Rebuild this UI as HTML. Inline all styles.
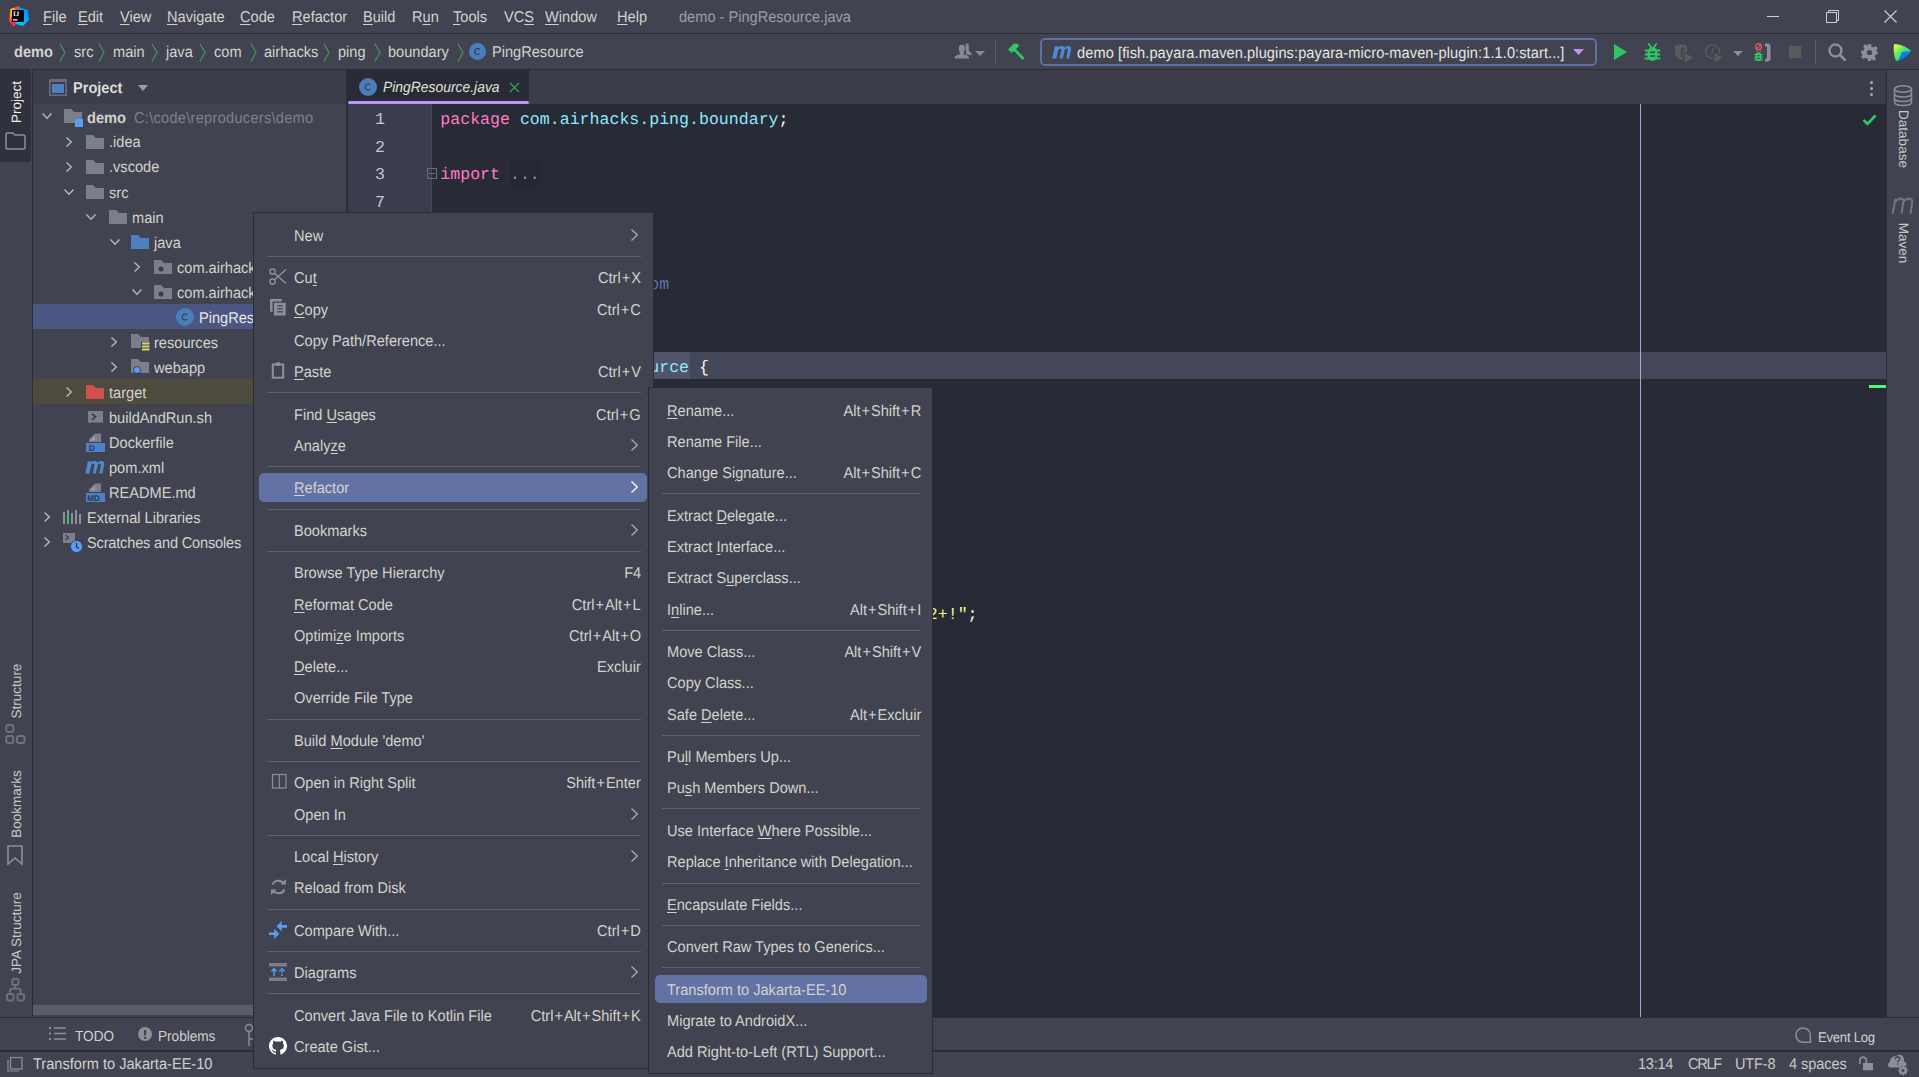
<!DOCTYPE html><html><head><meta charset="utf-8"><style>
html,body{margin:0;padding:0;width:1919px;height:1077px;overflow:hidden;background:#414450;}
body{position:relative;font-family:"Liberation Sans",sans-serif;text-rendering:geometricPrecision;}
.t{position:absolute;white-space:nowrap;line-height:normal;}
u{text-decoration:underline;text-underline-offset:1.5px;text-decoration-thickness:1px;}
svg{position:absolute;overflow:visible;}
</style></head><body>
<div style="position:absolute;left:0px;top:0px;width:1919px;height:33px;background:#414450;"></div>
<div style="position:absolute;left:0px;top:33px;width:1919px;height:1px;background:#2B2D39;"></div>
<div style="position:absolute;left:0px;top:34px;width:1919px;height:35px;background:#414450;"></div>
<div style="position:absolute;left:0px;top:69px;width:1919px;height:1px;background:#2B2D39;"></div>
<div style="position:absolute;left:0px;top:70px;width:32px;height:980px;background:#414450;"></div>
<div style="position:absolute;left:0px;top:70px;width:31px;height:92px;background:#2F313D;"></div>
<div style="position:absolute;left:32px;top:70px;width:1px;height:948px;background:#2B2D39;"></div>
<div style="position:absolute;left:33px;top:70px;width:313px;height:34px;background:#3B3D4B;"></div>
<div style="position:absolute;left:33px;top:104px;width:313px;height:913px;background:#414450;"></div>
<div style="position:absolute;left:346px;top:70px;width:2px;height:948px;background:#2B2D39;"></div>
<div style="position:absolute;left:348px;top:70px;width:1538px;height:34px;background:#3B3D4B;"></div>
<div style="position:absolute;left:348px;top:70px;width:181px;height:34px;background:#282A36;"></div>
<div style="position:absolute;left:348px;top:101px;width:181px;height:3px;background:#BD93F9;border-radius:2px;"></div>
<div style="position:absolute;left:348px;top:104px;width:1538px;height:913px;background:#282A36;"></div>
<div style="position:absolute;left:348px;top:104px;width:84px;height:913px;background:#3B3D4F;"></div>
<div style="position:absolute;left:1886px;top:70px;width:1px;height:948px;background:#2B2D39;"></div>
<div style="position:absolute;left:1887px;top:70px;width:32px;height:948px;background:#414450;"></div>
<div style="position:absolute;left:0px;top:1017px;width:1919px;height:1px;background:#2B2D39;"></div>
<div style="position:absolute;left:0px;top:1018px;width:1919px;height:32px;background:#414450;"></div>
<div style="position:absolute;left:0px;top:1050px;width:1919px;height:2px;background:#282A35;"></div>
<div style="position:absolute;left:0px;top:1052px;width:1919px;height:25px;background:#414450;"></div>
<div class="t" style="left:43px;top:8.66px;font-size:15.62px;color:#D2D2CE;font-weight:normal;font-family:'Liberation Sans',sans-serif;transform:scaleX(0.9346);transform-origin:0 0;"><u>F</u>ile</div>
<div class="t" style="left:78px;top:8.66px;font-size:15.62px;color:#D2D2CE;font-weight:normal;font-family:'Liberation Sans',sans-serif;transform:scaleX(0.9346);transform-origin:0 0;"><u>E</u>dit</div>
<div class="t" style="left:120px;top:8.66px;font-size:15.62px;color:#D2D2CE;font-weight:normal;font-family:'Liberation Sans',sans-serif;transform:scaleX(0.9346);transform-origin:0 0;"><u>V</u>iew</div>
<div class="t" style="left:167px;top:8.66px;font-size:15.62px;color:#D2D2CE;font-weight:normal;font-family:'Liberation Sans',sans-serif;transform:scaleX(0.9346);transform-origin:0 0;"><u>N</u>avigate</div>
<div class="t" style="left:240px;top:8.66px;font-size:15.62px;color:#D2D2CE;font-weight:normal;font-family:'Liberation Sans',sans-serif;transform:scaleX(0.9346);transform-origin:0 0;"><u>C</u>ode</div>
<div class="t" style="left:292px;top:8.66px;font-size:15.62px;color:#D2D2CE;font-weight:normal;font-family:'Liberation Sans',sans-serif;transform:scaleX(0.9346);transform-origin:0 0;"><u>R</u>efactor</div>
<div class="t" style="left:363px;top:8.66px;font-size:15.62px;color:#D2D2CE;font-weight:normal;font-family:'Liberation Sans',sans-serif;transform:scaleX(0.9346);transform-origin:0 0;"><u>B</u>uild</div>
<div class="t" style="left:412px;top:8.66px;font-size:15.62px;color:#D2D2CE;font-weight:normal;font-family:'Liberation Sans',sans-serif;transform:scaleX(0.9346);transform-origin:0 0;">R<u>u</u>n</div>
<div class="t" style="left:453px;top:8.66px;font-size:15.62px;color:#D2D2CE;font-weight:normal;font-family:'Liberation Sans',sans-serif;transform:scaleX(0.9346);transform-origin:0 0;"><u>T</u>ools</div>
<div class="t" style="left:504px;top:8.66px;font-size:15.62px;color:#D2D2CE;font-weight:normal;font-family:'Liberation Sans',sans-serif;transform:scaleX(0.9346);transform-origin:0 0;">VC<u>S</u></div>
<div class="t" style="left:545px;top:8.66px;font-size:15.62px;color:#D2D2CE;font-weight:normal;font-family:'Liberation Sans',sans-serif;transform:scaleX(0.9346);transform-origin:0 0;"><u>W</u>indow</div>
<div class="t" style="left:617px;top:8.66px;font-size:15.62px;color:#D2D2CE;font-weight:normal;font-family:'Liberation Sans',sans-serif;transform:scaleX(0.9346);transform-origin:0 0;"><u>H</u>elp</div>
<div class="t" style="left:679px;top:8.66px;font-size:15.62px;color:#9D9DA3;font-weight:normal;font-family:'Liberation Sans',sans-serif;transform:scaleX(0.9346);transform-origin:0 0;">demo - PingResource.java</div>
<svg style="left:8px;top:6px;" width="21" height="21" viewBox="0 0 21 21"><defs><linearGradient id="lg1" x1="0" y1="0" x2="1" y2="1"><stop offset="0" stop-color="#FF8100"/><stop offset="0.5" stop-color="#FE2857"/><stop offset="1" stop-color="#FF318C"/></linearGradient>
<linearGradient id="lg2" x1="1" y1="0" x2="0" y2="1"><stop offset="0" stop-color="#007EFF"/><stop offset="1" stop-color="#00D8FF"/></linearGradient></defs>
<path d="M2 3 L11 0 L14 6 L6 21 L1 15 Z" fill="url(#lg1)"/><path d="M10 1 L20 4 L21 14 L15 20 L8 18 Z" fill="url(#lg2)"/><path d="M2 14 L7 2 L3 3 Z" fill="#FFD000"/>
<rect x="4" y="4" width="12" height="12" fill="#000"/><text x="5" y="10.2" font-family="Liberation Serif" font-weight="bold" font-size="7" fill="#fff">IJ</text><rect x="5" y="13.2" width="4.5" height="1.3" fill="#fff"/></svg>
<div style="position:absolute;left:1767px;top:16px;width:12px;height:1px;background:#CFCFCF;"></div>
<svg style="left:1826px;top:10px;" width="13" height="13" viewBox="0 0 13 13"><rect x="0.5" y="2.5" width="10" height="10" fill="none" stroke="#CFCFCF" stroke-width="1"/><path d="M2.5 2.5 V0.5 H12.5 V10.5 H10.5" fill="none" stroke="#CFCFCF" stroke-width="1"/></svg>
<svg style="left:1884px;top:10px;" width="13" height="13" viewBox="0 0 13 13"><path d="M0.5 0.5 L12.5 12.5 M12.5 0.5 L0.5 12.5" stroke="#CFCFCF" stroke-width="1.1"/></svg>
<div class="t" style="left:14px;top:44.16px;font-size:15.62px;color:#D2D2CE;font-weight:bold;font-family:'Liberation Sans',sans-serif;transform:scaleX(0.9346);transform-origin:0 0;">demo</div>
<div class="t" style="left:74px;top:44.16px;font-size:15.62px;color:#D2D2CE;font-weight:normal;font-family:'Liberation Sans',sans-serif;transform:scaleX(0.9346);transform-origin:0 0;">src</div>
<div class="t" style="left:113px;top:44.16px;font-size:15.62px;color:#D2D2CE;font-weight:normal;font-family:'Liberation Sans',sans-serif;transform:scaleX(0.9346);transform-origin:0 0;">main</div>
<div class="t" style="left:166px;top:44.16px;font-size:15.62px;color:#D2D2CE;font-weight:normal;font-family:'Liberation Sans',sans-serif;transform:scaleX(0.9346);transform-origin:0 0;">java</div>
<div class="t" style="left:214px;top:44.16px;font-size:15.62px;color:#D2D2CE;font-weight:normal;font-family:'Liberation Sans',sans-serif;transform:scaleX(0.9346);transform-origin:0 0;">com</div>
<div class="t" style="left:264px;top:44.16px;font-size:15.62px;color:#D2D2CE;font-weight:normal;font-family:'Liberation Sans',sans-serif;transform:scaleX(0.9346);transform-origin:0 0;">airhacks</div>
<div class="t" style="left:338px;top:44.16px;font-size:15.62px;color:#D2D2CE;font-weight:normal;font-family:'Liberation Sans',sans-serif;transform:scaleX(0.9346);transform-origin:0 0;">ping</div>
<div class="t" style="left:388px;top:44.16px;font-size:15.62px;color:#D2D2CE;font-weight:normal;font-family:'Liberation Sans',sans-serif;transform:scaleX(0.9346);transform-origin:0 0;">boundary</div>
<svg style="left:59px;top:43px;" width="7" height="19" viewBox="0 0 7 19"><path d="M0.8 0.5 L6 9.5 L0.8 18.5" fill="none" stroke="#3D9A57" stroke-width="1.2"/></svg>
<svg style="left:98px;top:43px;" width="7" height="19" viewBox="0 0 7 19"><path d="M0.8 0.5 L6 9.5 L0.8 18.5" fill="none" stroke="#3D9A57" stroke-width="1.2"/></svg>
<svg style="left:151px;top:43px;" width="7" height="19" viewBox="0 0 7 19"><path d="M0.8 0.5 L6 9.5 L0.8 18.5" fill="none" stroke="#3D9A57" stroke-width="1.2"/></svg>
<svg style="left:199px;top:43px;" width="7" height="19" viewBox="0 0 7 19"><path d="M0.8 0.5 L6 9.5 L0.8 18.5" fill="none" stroke="#3D9A57" stroke-width="1.2"/></svg>
<svg style="left:250px;top:43px;" width="7" height="19" viewBox="0 0 7 19"><path d="M0.8 0.5 L6 9.5 L0.8 18.5" fill="none" stroke="#3D9A57" stroke-width="1.2"/></svg>
<svg style="left:323px;top:43px;" width="7" height="19" viewBox="0 0 7 19"><path d="M0.8 0.5 L6 9.5 L0.8 18.5" fill="none" stroke="#3D9A57" stroke-width="1.2"/></svg>
<svg style="left:374px;top:43px;" width="7" height="19" viewBox="0 0 7 19"><path d="M0.8 0.5 L6 9.5 L0.8 18.5" fill="none" stroke="#3D9A57" stroke-width="1.2"/></svg>
<svg style="left:457px;top:43px;" width="7" height="19" viewBox="0 0 7 19"><path d="M0.8 0.5 L6 9.5 L0.8 18.5" fill="none" stroke="#3D9A57" stroke-width="1.2"/></svg>
<svg style="left:469px;top:43px;" width="17" height="17" viewBox="0 0 17 17"><circle cx="8.5" cy="8.5" r="8.5" fill="#4A7DBA"/><path d="M10.9 6.5 A3.0 3.0 0 1 0 10.9 10.5" fill="none" stroke="#2E3B52" stroke-width="1.1"/></svg>
<div class="t" style="left:492px;top:44.16px;font-size:15.62px;color:#D2D2CE;font-weight:normal;font-family:'Liberation Sans',sans-serif;transform:scaleX(0.9346);transform-origin:0 0;">PingResource</div>
<svg style="left:948px;top:40px;" width="26" height="20" viewBox="0 0 26 20"><path d="M17.5 4.5 C17.8 3.8 18.5 3.6 19.2 3.6 C20.3 3.6 20.8 4.6 20.8 6 V10.6 C21.5 11.5 22.8 12.2 23.6 13.2 C24 14 23.8 15 23 15 H18 Z" fill="#868A96"/><ellipse cx="13.8" cy="8.6" rx="3.4" ry="4.2" fill="#868A96" stroke="#414450" stroke-width="1"/><path d="M6 19 C6 15.6 8.5 14.1 13.8 13.8 C19 14.1 21.6 15.6 21.6 19 Z" fill="#868A96" stroke="#414450" stroke-width="1"/><ellipse cx="13.8" cy="8.6" rx="3" ry="3.8" fill="#868A96"/><rect x="11.8" y="10" width="4" height="5.5" fill="#868A96"/></svg>
<svg style="left:975px;top:51px;" width="10" height="5" viewBox="0 0 10 5"><path d="M0 0 H10 L5 5 Z" fill="#868A96"/></svg>
<div style="position:absolute;left:995px;top:40px;width:1px;height:24px;background:#5B5E6B;"></div>
<svg style="left:1007px;top:43px;" width="19" height="18" viewBox="0 0 19 18"><path d="M1 6.5 L7 0.5 L11 1 L12 3 L9 6 L17.5 15 L15.5 17 L7 8 L4.5 10 Z" fill="#2FC760"/></svg>
<div style="position:absolute;left:1040px;top:38px;width:557px;height:28px;background:transparent;border:2px solid #6070A6;border-radius:5px;box-sizing:border-box;"></div>
<svg style="left:1052px;top:46px;" width="19.5" height="12.5" viewBox="0 0 20 12.6" preserveAspectRatio="none"><path d="M0.3 12.5 L2.9 0.3 H6 L5.8 1.4 C7 0.5 8.3 0 9.8 0 C11.3 0 12.4 0.6 12.7 1.6 C13.9 0.5 15.3 0 16.8 0 C19 0 20 1.2 19.6 3.2 L17.7 12.5 H14.5 L16.2 4.4 C16.4 3.3 16 2.8 15.1 2.8 C14.1 2.8 13.2 3.4 12.9 4.4 L11.1 12.5 H7.9 L9.6 4.4 C9.8 3.3 9.4 2.8 8.5 2.8 C7.5 2.8 6.6 3.4 6.3 4.4 L4.5 12.5 Z" fill="#5288D0"/></svg>
<div class="t" style="left:1077px;top:44.66px;font-size:15.62px;color:#E6E6E2;font-weight:normal;font-family:'Liberation Sans',sans-serif;transform:scaleX(0.9346);transform-origin:0 0;letter-spacing:0.1px;">demo [fish.payara.maven.plugins:payara-micro-maven-plugin:1.1.0:start<span style="letter-spacing:0px">...</span>]</div>
<svg style="left:1573px;top:49px;" width="11" height="6" viewBox="0 0 11 6"><path d="M0 0 H11 L5.5 6 Z" fill="#C792EA"/></svg>
<svg style="left:1614px;top:44px;" width="13" height="16" viewBox="0 0 13 16"><path d="M0 0 L13 8 L0 16 Z" fill="#2FC760"/></svg>
<svg style="left:1644px;top:43px;" width="17" height="19" viewBox="0 0 17 19"><path d="M5 1.2 L7 4.2 M12 1.2 L10 4.2" stroke="#2FC760" stroke-width="2" stroke-linecap="round"/><ellipse cx="8.5" cy="11" rx="5.3" ry="7" fill="#2FC760"/><path d="M1.5 7.5 H15.5 M1.5 11.5 H15.5 M1.5 15.5 H15.5" stroke="#2FC760" stroke-width="1.9" stroke-linecap="round"/><path d="M6 9.3 H11 M6 13 H11" stroke="#414450" stroke-width="1.4"/></svg>
<svg style="left:1675px;top:44px;" width="20" height="19" viewBox="0 0 20 19"><path d="M0 1.5 L6 0 L12 1.5 V9 C12 13 8 15 5.5 16 C2 14 0 12 0 9 Z" fill="#5A5A5A"/><path d="M9.5 4 A3.2 3.2 0 0 0 6.5 7 V13" fill="none" stroke="#414450" stroke-width="1.5"/><path d="M9 7.5 L19 13.5 L9 19.5 Z" fill="#5A5A5A" stroke="#414450" stroke-width="1.2"/></svg>
<svg style="left:1705px;top:44px;" width="20" height="19" viewBox="0 0 20 19"><circle cx="7.5" cy="7.5" r="6.8" fill="none" stroke="#5A5A5A" stroke-width="1.5"/><path d="M7.5 4 V8 L6 10" stroke="#5A5A5A" stroke-width="1.2" fill="none"/><path d="M9 8 L19 13.5 L9 19 Z" fill="#5A5A5A" stroke="#414450" stroke-width="1.2"/></svg>
<svg style="left:1733px;top:51px;" width="10" height="5" viewBox="0 0 10 5"><path d="M0 0 H10 L5 5 Z" fill="#8C8F9A"/></svg>
<svg style="left:1754px;top:43px;" width="18" height="19" viewBox="0 0 18 19"><circle cx="4.5" cy="3.8" r="3" fill="none" stroke="#E55353" stroke-width="1.4"/><path d="M2.5 5.8 L6.5 1.8" stroke="#E55353" stroke-width="1.2"/><path d="M2.5 8 L3.5 9.5 M6.5 8 L5.5 9.5" stroke="#2FC760" stroke-width="1.1"/><ellipse cx="4.5" cy="13.8" rx="3" ry="4.2" fill="#2FC760"/><path d="M0.5 11.5 H8.5 M0.5 14.2 H8.5 M0.5 17 H8.5" stroke="#2FC760" stroke-width="1.1" stroke-linecap="round"/><path d="M3 12.8 H6 M3 15.5 H6" stroke="#414450" stroke-width="0.9"/><path d="M11 0.5 H13.5 C15.5 0.5 16.5 1.5 16.5 3.5 V15.5 C16.5 17.5 15.5 18.5 13.5 18.5 H11 V15.5 H13 V3.5 H11 Z" fill="#8C8F9A"/></svg>
<div style="position:absolute;left:1789px;top:46px;width:12px;height:12px;background:#5A5A5A;"></div>
<div style="position:absolute;left:1815px;top:40px;width:1px;height:24px;background:#5B5E6B;"></div>
<svg style="left:1828px;top:43px;" width="19" height="19" viewBox="0 0 19 19"><circle cx="7.5" cy="7.5" r="6" fill="none" stroke="#8C8F9A" stroke-width="2.4"/><path d="M12 12 L17.5 17.5" stroke="#8C8F9A" stroke-width="2.6"/></svg>
<svg style="left:1861px;top:44px;" width="17" height="17" viewBox="0 0 17 17"><path d="M7 0 H10 L10.5 2.5 L12.5 3.4 L14.6 2 L16.7 4.1 L15.3 6.2 L16.2 8.2 L17 8.5 V8.5 L17 10 L14.5 10.5 L13.6 12.5 L15 14.6 L12.9 16.7 L10.8 15.3 L10 15.7 L10 17 H7 L6.5 14.6 L4.3 13.7 L2.1 15 L0 12.9 L1.4 10.8 L0.6 8.9 L0 8.5 V7 L2.5 6.5 L3.4 4.4 L2 2.3 L4.1 0.2 L6.2 1.6 L7 1.2 Z" fill="#8C8F9A"/><circle cx="8.5" cy="8.5" r="2.6" fill="#414450"/></svg>
<svg style="left:1893px;top:43px;" width="19" height="19" viewBox="0 0 19 19"><defs><linearGradient id="tb1" x1="0" y1="0" x2="1" y2="1"><stop offset="0" stop-color="#FCF84A"/><stop offset="0.5" stop-color="#3DEA62"/><stop offset="1" stop-color="#07C3F2"/></linearGradient></defs>
<path d="M1 1 C8 1 16 5 18 8 C16 11 8 17 3 18 C1 13 0 6 1 1 Z" fill="url(#tb1)"/><path d="M9 9 L18 8 C16 11 10 16 5 18 Z" fill="#087CFA"/></svg>
<div class="t" style="left:17px;top:102px;font-size:13.5px;color:#F0F0F0;transform:translate(-50%,-50%) rotate(-90deg);line-height:1;">Project</div>
<svg style="left:5px;top:132px;" width="22" height="18" viewBox="0 0 22 18"><path d="M1 2.5 C1 1.5 1.5 1 2.5 1 H8 L10 3 H18.5 C19.5 3 20 3.5 20 4.5 V15.5 C20 16.5 19.5 17 18.5 17 H2.5 C1.5 17 1 16.5 1 15.5 Z" fill="none" stroke="#8C8F9A" stroke-width="1.5"/></svg>
<div class="t" style="left:17px;top:691px;font-size:13.5px;color:#C8C8C8;transform:translate(-50%,-50%) rotate(-90deg);line-height:1;">Structure</div>
<svg style="left:0px;top:718px;" width="32" height="32" viewBox="0 0 32 32"><rect x="6.3" y="7" width="7" height="7" rx="2" fill="none" stroke="#6E717E" stroke-width="2"/><rect x="6.3" y="18" width="7" height="7" rx="2" fill="none" stroke="#6E717E" stroke-width="2"/><rect x="17" y="18" width="7.5" height="7" rx="2" fill="none" stroke="#6E717E" stroke-width="2"/></svg>
<div class="t" style="left:17px;top:804px;font-size:13.5px;color:#C8C8C8;transform:translate(-50%,-50%) rotate(-90deg);line-height:1;">Bookmarks</div>
<svg style="left:7px;top:845px;" width="17" height="20" viewBox="0 0 17 20"><path d="M1 1 H15 V19 L8 13 L1 19 Z" fill="none" stroke="#8C8F9A" stroke-width="1.6"/></svg>
<div class="t" style="left:17px;top:933px;font-size:13.5px;color:#C8C8C8;transform:translate(-50%,-50%) rotate(-90deg);line-height:1;">JPA Structure</div>
<svg style="left:0px;top:972px;" width="32" height="32" viewBox="0 0 32 32"><rect x="12.3" y="6.8" width="6.2" height="6.2" rx="1.8" fill="none" stroke="#6E717E" stroke-width="1.9"/><path d="M15.3 13 V16.6 M10 21.5 V18.5 Q10 16.6 11.9 16.6 H18.8 Q20.6 16.6 20.6 18.5 V21.5" fill="none" stroke="#6E717E" stroke-width="1.9"/><rect x="7" y="22" width="6.5" height="6.5" rx="1.8" fill="none" stroke="#6E717E" stroke-width="1.9"/><rect x="17.5" y="22" width="6.5" height="6.5" rx="1.8" fill="none" stroke="#6E717E" stroke-width="1.9"/></svg>
<svg style="left:49px;top:79px;" width="18" height="17" viewBox="0 0 18 17"><rect x="0.8" y="0.8" width="16.4" height="15.4" fill="none" stroke="#686B77" stroke-width="1.6"/><rect x="0" y="0" width="18" height="3" fill="#686B77"/><rect x="3" y="5" width="12" height="9" fill="#4E7FC0"/></svg>
<div class="t" style="left:73px;top:79.66px;font-size:15.62px;color:#DCDCD8;font-weight:bold;font-family:'Liberation Sans',sans-serif;transform:scaleX(0.9346);transform-origin:0 0;">Project</div>
<svg style="left:138px;top:85px;" width="10" height="6" viewBox="0 0 10 6"><path d="M0 0 H10 L5 6 Z" fill="#9A9DA6"/></svg>
<div style="position:absolute;left:33px;top:304px;width:313px;height:25px;background:#4B5782;"></div>
<div style="position:absolute;left:33px;top:379px;width:313px;height:25px;background:#4D4A3E;"></div>
<svg style="left:42px;top:113px;" width="10" height="6" viewBox="0 0 10 6"><path d="M0.5 0.5 L5.0 5.3 L9.5 0.5" fill="none" stroke="#B8B8B8" stroke-width="1.4"/></svg>
<svg style="left:64px;top:109px;" width="18" height="14" viewBox="0 0 18 14"><path d="M0 0 H7 L10 3 H18 V14 H0 Z" fill="#7C7F8A"/></svg>
<div style="position:absolute;left:75px;top:119px;width:8px;height:8px;background:#589DF6;"></div>
<div class="t" style="left:87px;top:109.66px;font-size:15.62px;color:#D2D2CE;font-weight:bold;font-family:'Liberation Sans',sans-serif;transform:scaleX(0.9346);transform-origin:0 0;">demo</div>
<div class="t" style="left:134px;top:109.66px;font-size:15.62px;color:#7E808A;font-weight:normal;font-family:'Liberation Sans',sans-serif;transform:scaleX(0.9346);transform-origin:0 0;letter-spacing:0.3px;">C:\code\reproducers\demo</div>
<svg style="left:66px;top:137px;" width="6" height="10" viewBox="0 0 6 10"><path d="M0.5 0.5 L5.3 5.0 L0.5 9.5" fill="none" stroke="#B8B8B8" stroke-width="1.4"/></svg>
<svg style="left:86px;top:135px;" width="18" height="14" viewBox="0 0 18 14"><path d="M0 0 H7 L10 3 H18 V14 H0 Z" fill="#7C7F8A"/></svg>
<div class="t" style="left:109px;top:134.16px;font-size:15.62px;color:#D2D2CE;font-weight:normal;font-family:'Liberation Sans',sans-serif;transform:scaleX(0.9346);transform-origin:0 0;">.idea</div>
<svg style="left:66px;top:162px;" width="6" height="10" viewBox="0 0 6 10"><path d="M0.5 0.5 L5.3 5.0 L0.5 9.5" fill="none" stroke="#B8B8B8" stroke-width="1.4"/></svg>
<svg style="left:86px;top:160px;" width="18" height="14" viewBox="0 0 18 14"><path d="M0 0 H7 L10 3 H18 V14 H0 Z" fill="#7C7F8A"/></svg>
<div class="t" style="left:109px;top:159.16px;font-size:15.62px;color:#D2D2CE;font-weight:normal;font-family:'Liberation Sans',sans-serif;transform:scaleX(0.9346);transform-origin:0 0;">.vscode</div>
<svg style="left:64px;top:189px;" width="10" height="6" viewBox="0 0 10 6"><path d="M0.5 0.5 L5.0 5.3 L9.5 0.5" fill="none" stroke="#B8B8B8" stroke-width="1.4"/></svg>
<svg style="left:86px;top:185px;" width="18" height="14" viewBox="0 0 18 14"><path d="M0 0 H7 L10 3 H18 V14 H0 Z" fill="#7C7F8A"/></svg>
<div class="t" style="left:109px;top:184.66px;font-size:15.62px;color:#D2D2CE;font-weight:normal;font-family:'Liberation Sans',sans-serif;transform:scaleX(0.9346);transform-origin:0 0;">src</div>
<svg style="left:86px;top:214px;" width="10" height="6" viewBox="0 0 10 6"><path d="M0.5 0.5 L5.0 5.3 L9.5 0.5" fill="none" stroke="#B8B8B8" stroke-width="1.4"/></svg>
<svg style="left:109px;top:210px;" width="18" height="14" viewBox="0 0 18 14"><path d="M0 0 H7 L10 3 H18 V14 H0 Z" fill="#7C7F8A"/></svg>
<div class="t" style="left:132px;top:209.66px;font-size:15.62px;color:#D2D2CE;font-weight:normal;font-family:'Liberation Sans',sans-serif;transform:scaleX(0.9346);transform-origin:0 0;">main</div>
<svg style="left:110px;top:239px;" width="10" height="6" viewBox="0 0 10 6"><path d="M0.5 0.5 L5.0 5.3 L9.5 0.5" fill="none" stroke="#B8B8B8" stroke-width="1.4"/></svg>
<svg style="left:131px;top:235px;" width="18" height="14" viewBox="0 0 18 14"><path d="M0 0 H7 L10 3 H18 V14 H0 Z" fill="#4E7FC0"/></svg>
<div class="t" style="left:154px;top:234.66px;font-size:15.62px;color:#D2D2CE;font-weight:normal;font-family:'Liberation Sans',sans-serif;transform:scaleX(0.9346);transform-origin:0 0;">java</div>
<svg style="left:134px;top:262px;" width="6" height="10" viewBox="0 0 6 10"><path d="M0.5 0.5 L5.3 5.0 L0.5 9.5" fill="none" stroke="#B8B8B8" stroke-width="1.4"/></svg>
<svg style="left:154px;top:260px;" width="18" height="14" viewBox="0 0 18 14"><path d="M0 0 H7 L10 3 H18 V14 H0 Z" fill="#7C7F8A"/></svg>
<svg style="left:158px;top:266px;" width="6" height="6" viewBox="0 0 6 6"><circle cx="3" cy="3" r="2.5" fill="#3A3C48"/></svg>
<div class="t" style="left:177px;top:259.66px;font-size:15.62px;color:#D2D2CE;font-weight:normal;font-family:'Liberation Sans',sans-serif;transform:scaleX(0.9346);transform-origin:0 0;">com.airhacks.ping</div>
<svg style="left:132px;top:289px;" width="10" height="6" viewBox="0 0 10 6"><path d="M0.5 0.5 L5.0 5.3 L9.5 0.5" fill="none" stroke="#B8B8B8" stroke-width="1.4"/></svg>
<svg style="left:154px;top:285px;" width="18" height="14" viewBox="0 0 18 14"><path d="M0 0 H7 L10 3 H18 V14 H0 Z" fill="#7C7F8A"/></svg>
<svg style="left:158px;top:291px;" width="6" height="6" viewBox="0 0 6 6"><circle cx="3" cy="3" r="2.5" fill="#3A3C48"/></svg>
<div class="t" style="left:177px;top:284.66px;font-size:15.62px;color:#D2D2CE;font-weight:normal;font-family:'Liberation Sans',sans-serif;transform:scaleX(0.9346);transform-origin:0 0;">com.airhacks.ping.boundary</div>
<svg style="left:176px;top:308px;" width="18" height="18" viewBox="0 0 18 18"><circle cx="9.0" cy="9.0" r="9.0" fill="#4A7DBA"/><path d="M11.4 7.0 A3.0 3.0 0 1 0 11.4 11.0" fill="none" stroke="#2E3B52" stroke-width="1.1"/></svg>
<div class="t" style="left:199px;top:309.66px;font-size:15.62px;color:#E8E8E4;font-weight:normal;font-family:'Liberation Sans',sans-serif;transform:scaleX(0.9346);transform-origin:0 0;">PingResource</div>
<svg style="left:111px;top:337px;" width="6" height="10" viewBox="0 0 6 10"><path d="M0.5 0.5 L5.3 5.0 L0.5 9.5" fill="none" stroke="#B8B8B8" stroke-width="1.4"/></svg>
<svg style="left:131px;top:334px;" width="18" height="14" viewBox="0 0 18 14"><path d="M0 0 H7 L10 3 H18 V14 H0 Z" fill="#7C7F8A"/></svg>
<svg style="left:141px;top:342px;" width="9" height="10" viewBox="0 0 9 10"><rect x="0" y="0" width="9" height="10" fill="#414450"/><path d="M1 1.5 H8.5 M1 4.5 H8.5 M1 7.5 H8.5" stroke="#D9D572" stroke-width="1.8"/></svg>
<div class="t" style="left:154px;top:334.66px;font-size:15.62px;color:#D2D2CE;font-weight:normal;font-family:'Liberation Sans',sans-serif;transform:scaleX(0.9346);transform-origin:0 0;">resources</div>
<svg style="left:111px;top:362px;" width="6" height="10" viewBox="0 0 6 10"><path d="M0.5 0.5 L5.3 5.0 L0.5 9.5" fill="none" stroke="#B8B8B8" stroke-width="1.4"/></svg>
<svg style="left:131px;top:359px;" width="18" height="14" viewBox="0 0 18 14"><path d="M0 0 H7 L10 3 H18 V14 H0 Z" fill="#7C7F8A"/></svg>
<svg style="left:133px;top:366px;" width="8" height="8" viewBox="0 0 8 8"><circle cx="4" cy="4" r="3.8" fill="#3A3C48"/><circle cx="4" cy="4" r="3" fill="#589DF6"/></svg>
<div class="t" style="left:154px;top:359.66px;font-size:15.62px;color:#D2D2CE;font-weight:normal;font-family:'Liberation Sans',sans-serif;transform:scaleX(0.9346);transform-origin:0 0;">webapp</div>
<svg style="left:66px;top:387px;" width="6" height="10" viewBox="0 0 6 10"><path d="M0.5 0.5 L5.3 5.0 L0.5 9.5" fill="none" stroke="#B8B8B8" stroke-width="1.4"/></svg>
<svg style="left:86px;top:385px;" width="18" height="14" viewBox="0 0 18 14"><path d="M0 0 H7 L10 3 H18 V14 H0 Z" fill="#D14F4F"/></svg>
<div class="t" style="left:109px;top:384.66px;font-size:15.62px;color:#D2D2CE;font-weight:normal;font-family:'Liberation Sans',sans-serif;transform:scaleX(0.9346);transform-origin:0 0;">target</div>
<svg style="left:87.5px;top:411px;" width="15" height="12" viewBox="0 0 15 12"><rect x="0" y="0" width="15" height="11.6" fill="#7C7F8A"/><path d="M4 2.8 L7.5 5.8 L4 8.8" fill="none" stroke="#3A3C48" stroke-width="1.6"/></svg>
<div class="t" style="left:109px;top:409.66px;font-size:15.62px;color:#D2D2CE;font-weight:normal;font-family:'Liberation Sans',sans-serif;transform:scaleX(0.9346);transform-origin:0 0;">buildAndRun.sh</div>
<svg style="left:86px;top:433px;" width="19" height="19" viewBox="0 0 19 19"><rect x="3" y="0.5" width="12" height="8.5" fill="#7C7F8A"/><path d="M2.5 0 H9.5 L2.5 7 Z" fill="#414450"/><path d="M4 7.5 L9 2.5 V7.5 Z" fill="#9A9DA6"/><rect x="0" y="10" width="19" height="9" fill="#4E80C4"/><text x="2.8" y="17.8" font-family="Liberation Sans" font-weight="bold" font-size="8.5" fill="#2B3A55">D</text></svg>
<div class="t" style="left:109px;top:434.66px;font-size:15.62px;color:#D2D2CE;font-weight:normal;font-family:'Liberation Sans',sans-serif;transform:scaleX(0.9346);transform-origin:0 0;">Dockerfile</div>
<svg style="left:85.3px;top:460.6px;" width="19.6" height="12.5" viewBox="0 0 20 12.6" preserveAspectRatio="none"><path d="M0.3 12.5 L2.9 0.3 H6 L5.8 1.4 C7 0.5 8.3 0 9.8 0 C11.3 0 12.4 0.6 12.7 1.6 C13.9 0.5 15.3 0 16.8 0 C19 0 20 1.2 19.6 3.2 L17.7 12.5 H14.5 L16.2 4.4 C16.4 3.3 16 2.8 15.1 2.8 C14.1 2.8 13.2 3.4 12.9 4.4 L11.1 12.5 H7.9 L9.6 4.4 C9.8 3.3 9.4 2.8 8.5 2.8 C7.5 2.8 6.6 3.4 6.3 4.4 L4.5 12.5 Z" fill="#5288D0"/></svg>
<div class="t" style="left:109px;top:459.66px;font-size:15.62px;color:#D2D2CE;font-weight:normal;font-family:'Liberation Sans',sans-serif;transform:scaleX(0.9346);transform-origin:0 0;">pom.xml</div>
<svg style="left:86px;top:483px;" width="19" height="19" viewBox="0 0 19 19"><rect x="3" y="0.5" width="12" height="8.5" fill="#7C7F8A"/><path d="M2.5 0 H9.5 L2.5 7 Z" fill="#414450"/><path d="M4 7.5 L9 2.5 V7.5 Z" fill="#9A9DA6"/><rect x="0" y="10" width="19" height="9" fill="#4E80C4"/><text x="1.2" y="17.8" font-family="Liberation Sans" font-weight="bold" font-size="8.2" fill="#2B3A55">MD</text></svg>
<div class="t" style="left:109px;top:484.66px;font-size:15.62px;color:#D2D2CE;font-weight:normal;font-family:'Liberation Sans',sans-serif;transform:scaleX(0.9346);transform-origin:0 0;">README.md</div>
<svg style="left:44px;top:512px;" width="6" height="10" viewBox="0 0 6 10"><path d="M0.5 0.5 L5.3 5.0 L0.5 9.5" fill="none" stroke="#B8B8B8" stroke-width="1.4"/></svg>
<svg style="left:63px;top:509px;" width="18" height="16" viewBox="0 0 18 16"><path d="M1 3 V15 M5 1 V15 M9 4 V15 M13 1 V15 M17 5 V15" stroke="#8C8F9A" stroke-width="2"/><path d="M5 5 V15" stroke="#2FC760" stroke-width="2"/></svg>
<div class="t" style="left:87px;top:509.66px;font-size:15.62px;color:#D2D2CE;font-weight:normal;font-family:'Liberation Sans',sans-serif;transform:scaleX(0.9346);transform-origin:0 0;">External Libraries</div>
<svg style="left:44px;top:537px;" width="6" height="10" viewBox="0 0 6 10"><path d="M0.5 0.5 L5.3 5.0 L0.5 9.5" fill="none" stroke="#B8B8B8" stroke-width="1.4"/></svg>
<svg style="left:63px;top:533px;" width="20" height="20" viewBox="0 0 20 20"><rect x="0" y="0" width="12" height="10" fill="#7C7F8A"/><path d="M2.5 2 L5.5 4.5 L2.5 7" stroke="#414450" stroke-width="1.3" fill="none"/><circle cx="13.5" cy="13.5" r="6" fill="#589DF6" stroke="#414450" stroke-width="1"/><path d="M13.5 10 V14 L16 15.5" stroke="#2B2D3A" stroke-width="1.3" fill="none"/></svg>
<div class="t" style="left:87px;top:534.66px;font-size:15.62px;color:#D2D2CE;font-weight:normal;font-family:'Liberation Sans',sans-serif;transform:scaleX(0.9346);transform-origin:0 0;letter-spacing:-0.2px;">Scratches and Consoles</div>
<div style="position:absolute;left:33px;top:1005px;width:220px;height:10px;background:#5A5D6A;"></div>
<svg style="left:359px;top:78px;" width="18" height="18" viewBox="0 0 18 18"><circle cx="9.0" cy="9.0" r="9.0" fill="#4A7DBA"/><path d="M11.4 7.0 A3.0 3.0 0 1 0 11.4 11.0" fill="none" stroke="#2E3B52" stroke-width="1.1"/></svg>
<div class="t" style="left:383px;top:80.34px;font-size:14.87px;color:#E2E2DA;font-weight:normal;font-family:'Liberation Sans',sans-serif;transform:scaleX(0.9346);transform-origin:0 0;"><i>PingResource.java</i></div>
<svg style="left:509px;top:82px;" width="11" height="11" viewBox="0 0 11 11"><path d="M1 1 L10 10 M10 1 L1 10" stroke="#39A060" stroke-width="1.25"/></svg>
<div style="position:absolute;left:1870px;top:81px;width:3px;height:3px;background:#A8AAB2;border-radius:50%;"></div>
<div style="position:absolute;left:1870px;top:87px;width:3px;height:3px;background:#A8AAB2;border-radius:50%;"></div>
<div style="position:absolute;left:1870px;top:93px;width:3px;height:3px;background:#A8AAB2;border-radius:50%;"></div>
<div style="position:absolute;left:431px;top:104px;width:1px;height:913px;background:#45475A;"></div>
<div style="position:absolute;left:432px;top:352px;width:1454px;height:27px;background:#44475A;"></div>
<div style="position:absolute;left:432px;top:352px;width:0px;height:27px;background:#44475A;"></div>
<div class="t" style="right:1534px;top:110.19px;font-size:16.58px;font-family:'Liberation Mono',monospace;color:#C5C6CE;">1</div>
<div class="t" style="right:1534px;top:137.69px;font-size:16.58px;font-family:'Liberation Mono',monospace;color:#C5C6CE;">2</div>
<div class="t" style="right:1534px;top:165.19px;font-size:16.58px;font-family:'Liberation Mono',monospace;color:#C5C6CE;">3</div>
<div class="t" style="right:1534px;top:192.69px;font-size:16.58px;font-family:'Liberation Mono',monospace;color:#C5C6CE;">7</div>
<div class="t" style="left:440.30px;top:110.19px;font-size:16.58px;font-family:'Liberation Mono',monospace;"><span style="color:#FF79C6">package</span><span style="color:#F8F8F2"> </span><span style="color:#8BE9FD">com.airhacks.ping.boundary</span><span style="color:#F8F8F2">;</span></div>
<div class="t" style="left:440.30px;top:165.19px;font-size:16.58px;font-family:'Liberation Mono',monospace;"><span style="color:#FF79C6">import</span><span style="color:#F8F8F2"> </span></div>
<div style="position:absolute;left:510px;top:159px;width:30px;height:28px;background:#252732;"></div>
<div class="t" style="left:509.95px;top:165.19px;font-size:16.58px;font-family:'Liberation Mono',monospace;"><span style="color:#8C91AC">...</span></div>
<svg style="left:427px;top:168px;" width="10" height="11" viewBox="0 0 10 11"><rect x="0.5" y="0.5" width="9" height="10" fill="none" stroke="#6B6E85" stroke-width="1"/><path d="M2 5.5 H8" stroke="#6B6E85" stroke-width="1"/></svg>
<div class="t" style="left:450.25px;top:275.19px;font-size:16.58px;font-family:'Liberation Mono',monospace;"><span style="color:#6272A4"> * @author airhacks.com</span></div>
<div style="position:absolute;left:649.9px;top:352px;width:39.8px;height:27px;background:#505369;"></div>
<div class="t" style="left:440.30px;top:357.69px;font-size:16.58px;font-family:'Liberation Mono',monospace;"><span style="color:#FF79C6">public</span><span style="color:#F8F8F2"> class </span><span style="color:#8BE9FD">PingResource</span><span style="color:#F8F8F2"> {</span></div>
<div class="t" style="left:519.90px;top:605.19px;font-size:16.58px;font-family:'Liberation Mono',monospace;"><span style="color:#FF79C6">return</span><span style="color:#F8F8F2"> </span><span style="color:#F1FA8C">"ping from Jakarta EE 10 and Java 2+!"</span><span style="color:#F8F8F2">;</span></div>
<div style="position:absolute;left:1640px;top:104px;width:1px;height:913px;background:#A3AADB;"></div>
<svg style="left:1862px;top:114px;" width="15" height="12" viewBox="0 0 15 12"><path d="M1.5 6 L5.5 10 L13.5 1.5" fill="none" stroke="#2FC760" stroke-width="2.6"/></svg>
<div style="position:absolute;left:1869px;top:385px;width:17px;height:2.5px;background:#50FA7B;"></div>
<svg style="left:1893px;top:85px;" width="20" height="21" viewBox="0 0 20 21"><ellipse cx="10" cy="4" rx="8.5" ry="3.2" fill="none" stroke="#8C8F9A" stroke-width="1.5"/><path d="M1.5 4 V17 C1.5 19 5 20.5 10 20.5 C15 20.5 18.5 19 18.5 17 V4 M1.5 8.5 C1.5 10.5 5 12 10 12 C15 12 18.5 10.5 18.5 8.5 M1.5 13 C1.5 15 5 16.5 10 16.5 C15 16.5 18.5 15 18.5 13" fill="none" stroke="#8C8F9A" stroke-width="1.5"/></svg>
<div class="t" style="left:1903px;top:139px;font-size:13.5px;color:#C8C8C8;transform:translate(-50%,-50%) rotate(90deg);line-height:1;">Database</div>
<svg style="left:1886px;top:190px;" width="33" height="32" viewBox="0 0 33 32"><path d="M6.8 23 L9.3 9.6 M9.0 11.8 C11 9.3 13 8.6 15 8.6 C17 8.6 17.6 10 17.3 12 L15.6 23 M17.3 12 C19 9.5 21 8.6 23 8.6 C25.5 8.6 26.5 10 26.2 12.5 L24.6 23" fill="none" stroke="#71747F" stroke-width="2.1" stroke-linecap="round"/></svg>
<div class="t" style="left:1903px;top:243px;font-size:13.5px;color:#C8C8C8;transform:translate(-50%,-50%) rotate(90deg);line-height:1;">Maven</div>
<svg style="left:49px;top:1027px;" width="18" height="14" viewBox="0 0 18 14"><path d="M0 1 H2 M0 6.5 H2 M0 12 H2" stroke="#8C8F9A" stroke-width="2"/><path d="M5 1 H17 M5 6.5 H17 M5 12 H17" stroke="#8C8F9A" stroke-width="1.6"/></svg>
<div class="t" style="left:75px;top:1028.63px;font-size:14.55px;color:#D0D0D0;font-weight:normal;font-family:'Liberation Sans',sans-serif;transform:scaleX(0.9346);transform-origin:0 0;">TODO</div>
<svg style="left:138px;top:1027px;" width="14" height="14" viewBox="0 0 14 14"><circle cx="7" cy="7" r="7" fill="#8C8F9A"/><rect x="6" y="3" width="2.2" height="5.5" fill="#414450"/><rect x="6" y="9.8" width="2.2" height="2" fill="#414450"/></svg>
<div class="t" style="left:158px;top:1028.63px;font-size:14.55px;color:#D0D0D0;font-weight:normal;font-family:'Liberation Sans',sans-serif;transform:scaleX(0.9346);transform-origin:0 0;">Problems</div>
<svg style="left:244px;top:1024px;" width="10" height="24" viewBox="0 0 10 24"><circle cx="5" cy="4" r="3.5" fill="none" stroke="#8C8F9A" stroke-width="1.4"/><path d="M5 7.5 V22 M5 15 H9" stroke="#8C8F9A" stroke-width="1.4"/></svg>
<svg style="left:1795px;top:1027px;" width="17" height="17" viewBox="0 0 17 17"><path d="M15.5 15.3 H8 A7.2 7.2 0 1 1 15.3 8.1 Z" fill="none" stroke="#8C8F9A" stroke-width="1.5"/></svg>
<div class="t" style="left:1817.5px;top:1029.11px;font-size:14.02px;color:#D0D0D0;font-weight:normal;font-family:'Liberation Sans',sans-serif;transform:scaleX(0.9346);transform-origin:0 0;letter-spacing:-0.25px;">Event Log</div>
<svg style="left:6px;top:1057px;" width="17" height="16" viewBox="0 0 17 16"><rect x="4.5" y="0.5" width="11.5" height="11.5" fill="none" stroke="#8C8F9A" stroke-width="1.2"/><path d="M2 3 V14 H13" fill="none" stroke="#8C8F9A" stroke-width="1.2"/></svg>
<div class="t" style="left:33px;top:1055.66px;font-size:15.62px;color:#D0D0D0;font-weight:normal;font-family:'Liberation Sans',sans-serif;transform:scaleX(0.9346);transform-origin:0 0;">Transform to Jakarta-EE-10</div>
<div class="t" style="left:1637.5px;top:1055.66px;font-size:15.62px;color:#C8C8C4;font-weight:normal;font-family:'Liberation Sans',sans-serif;transform:scaleX(0.9346);transform-origin:0 0;letter-spacing:-0.3px;">13:14</div>
<div class="t" style="left:1688px;top:1055.66px;font-size:15.62px;color:#C8C8C4;font-weight:normal;font-family:'Liberation Sans',sans-serif;transform:scaleX(0.9346);transform-origin:0 0;letter-spacing:-1.4px;">CRLF</div>
<div class="t" style="left:1735px;top:1055.66px;font-size:15.62px;color:#C8C8C4;font-weight:normal;font-family:'Liberation Sans',sans-serif;transform:scaleX(0.9346);transform-origin:0 0;letter-spacing:-0.2px;">UTF-8</div>
<div class="t" style="left:1789px;top:1055.66px;font-size:15.62px;color:#C8C8C4;font-weight:normal;font-family:'Liberation Sans',sans-serif;transform:scaleX(0.9346);transform-origin:0 0;letter-spacing:-0.1px;">4 spaces</div>
<svg style="left:1858px;top:1055px;" width="16" height="17" viewBox="0 0 16 17"><rect x="5" y="8" width="10" height="7.3" fill="#8C8F9A"/><path d="M1.8 9 V5.5 A3.3 3.3 0 0 1 8.4 5.5 V8" fill="none" stroke="#8C8F9A" stroke-width="1.7"/></svg>
<svg style="left:1887px;top:1054px;" width="22" height="22" viewBox="0 0 22 22"><path d="M3.5 13.5 C0.5 13.5 0 9 2.8 8.2 C2.8 3.5 6.5 1.5 9.5 2.3 C11 0.3 14.5 0.3 16 2.8 C17.5 5 17 7.5 17 7.5 C19.5 8 20 11 18.5 12.5 L14 13.5 Z" fill="#8C8F9A"/><path d="M8.3 5.2 C8.3 3.6 9.5 3 10.6 3 C11.8 3 12.8 3.7 12.8 4.9 C12.8 6.5 10.7 6.6 10.7 8.3" fill="none" stroke="#414450" stroke-width="1.3"/><rect x="10" y="9.3" width="1.4" height="1.4" fill="#414450"/><circle cx="16" cy="16.5" r="4.6" fill="#414450"/><path d="M15 11.8 H17 L17.3 13.2 L18.6 12.5 L20 13.9 L19.3 15.2 L20.7 15.5 V17.5 L19.3 17.8 L20 19.1 L18.6 20.5 L17.3 19.8 L17 21.2 H15 L14.7 19.8 L13.4 20.5 L12 19.1 L12.7 17.8 L11.3 17.5 V15.5 L12.7 15.2 L12 13.9 L13.4 12.5 L14.7 13.2 Z" fill="#8C8F9A"/><circle cx="16" cy="16.5" r="1.5" fill="#414450"/></svg>
<div style="position:absolute;left:253px;top:212px;width:401px;height:857px;background:#414450;border:1px solid #2A2C37;box-sizing:border-box;"></div>
<div style="position:absolute;left:259px;top:473px;width:388px;height:29px;background:#6272A4;border-radius:5px;"></div>
<div class="t" style="left:294px;top:227.66px;font-size:15.62px;color:#D2D2CE;font-weight:normal;font-family:'Liberation Sans',sans-serif;transform:scaleX(0.9346);transform-origin:0 0;">New</div>
<div style="position:absolute;left:267px;top:256px;width:374px;height:1px;background:#5D6070;"></div>
<div class="t" style="left:294px;top:269.66px;font-size:15.62px;color:#D2D2CE;font-weight:normal;font-family:'Liberation Sans',sans-serif;transform:scaleX(0.9346);transform-origin:0 0;">Cu<u>t</u></div>
<div class="t" style="right:1278px;top:269.66px;font-size:15.62px;color:#D2D2CE;transform:scaleX(0.9346);transform-origin:100% 0;">Ctrl<span style="margin:0 1.05px">+</span>X</div>
<div class="t" style="left:294px;top:301.66px;font-size:15.62px;color:#D2D2CE;font-weight:normal;font-family:'Liberation Sans',sans-serif;transform:scaleX(0.9346);transform-origin:0 0;"><u>C</u>opy</div>
<div class="t" style="right:1278px;top:301.66px;font-size:15.62px;color:#D2D2CE;transform:scaleX(0.9346);transform-origin:100% 0;">Ctrl<span style="margin:0 1.05px">+</span>C</div>
<div class="t" style="left:294px;top:332.66px;font-size:15.62px;color:#D2D2CE;font-weight:normal;font-family:'Liberation Sans',sans-serif;transform:scaleX(0.9346);transform-origin:0 0;">Copy Path/Reference<span style="letter-spacing:0px">...</span></div>
<div class="t" style="left:294px;top:363.66px;font-size:15.62px;color:#D2D2CE;font-weight:normal;font-family:'Liberation Sans',sans-serif;transform:scaleX(0.9346);transform-origin:0 0;"><u>P</u>aste</div>
<div class="t" style="right:1278px;top:363.66px;font-size:15.62px;color:#D2D2CE;transform:scaleX(0.9346);transform-origin:100% 0;">Ctrl<span style="margin:0 1.05px">+</span>V</div>
<div style="position:absolute;left:267px;top:392px;width:374px;height:1px;background:#5D6070;"></div>
<div class="t" style="left:294px;top:406.66px;font-size:15.62px;color:#D2D2CE;font-weight:normal;font-family:'Liberation Sans',sans-serif;transform:scaleX(0.9346);transform-origin:0 0;">Find <u>U</u>sages</div>
<div class="t" style="right:1278px;top:406.66px;font-size:15.62px;color:#D2D2CE;transform:scaleX(0.9346);transform-origin:100% 0;">Ctrl<span style="margin:0 1.05px">+</span>G</div>
<div class="t" style="left:294px;top:437.66px;font-size:15.62px;color:#D2D2CE;font-weight:normal;font-family:'Liberation Sans',sans-serif;transform:scaleX(0.9346);transform-origin:0 0;">Analy<u>z</u>e</div>
<div style="position:absolute;left:267px;top:466px;width:374px;height:1px;background:#5D6070;"></div>
<div class="t" style="left:294px;top:479.66px;font-size:15.62px;color:#D2D2CE;font-weight:normal;font-family:'Liberation Sans',sans-serif;transform:scaleX(0.9346);transform-origin:0 0;"><u>R</u>efactor</div>
<div style="position:absolute;left:267px;top:509px;width:374px;height:1px;background:#5D6070;"></div>
<div class="t" style="left:294px;top:522.66px;font-size:15.62px;color:#D2D2CE;font-weight:normal;font-family:'Liberation Sans',sans-serif;transform:scaleX(0.9346);transform-origin:0 0;">Bookmarks</div>
<div style="position:absolute;left:267px;top:551px;width:374px;height:1px;background:#5D6070;"></div>
<div class="t" style="left:294px;top:564.66px;font-size:15.62px;color:#D2D2CE;font-weight:normal;font-family:'Liberation Sans',sans-serif;transform:scaleX(0.9346);transform-origin:0 0;">Browse Type Hierarchy</div>
<div class="t" style="right:1278px;top:564.66px;font-size:15.62px;color:#D2D2CE;transform:scaleX(0.9346);transform-origin:100% 0;">F4</div>
<div class="t" style="left:294px;top:596.66px;font-size:15.62px;color:#D2D2CE;font-weight:normal;font-family:'Liberation Sans',sans-serif;transform:scaleX(0.9346);transform-origin:0 0;"><u>R</u>eformat Code</div>
<div class="t" style="right:1278px;top:596.66px;font-size:15.62px;color:#D2D2CE;transform:scaleX(0.9346);transform-origin:100% 0;">Ctrl<span style="margin:0 1.05px">+</span>Alt<span style="margin:0 1.05px">+</span>L</div>
<div class="t" style="left:294px;top:627.66px;font-size:15.62px;color:#D2D2CE;font-weight:normal;font-family:'Liberation Sans',sans-serif;transform:scaleX(0.9346);transform-origin:0 0;">Optimi<u>z</u>e Imports</div>
<div class="t" style="right:1278px;top:627.66px;font-size:15.62px;color:#D2D2CE;transform:scaleX(0.9346);transform-origin:100% 0;">Ctrl<span style="margin:0 1.05px">+</span>Alt<span style="margin:0 1.05px">+</span>O</div>
<div class="t" style="left:294px;top:658.66px;font-size:15.62px;color:#D2D2CE;font-weight:normal;font-family:'Liberation Sans',sans-serif;transform:scaleX(0.9346);transform-origin:0 0;"><u>D</u>elete<span style="letter-spacing:0px">...</span></div>
<div class="t" style="right:1278px;top:658.66px;font-size:15.62px;color:#D2D2CE;transform:scaleX(0.9346);transform-origin:100% 0;">Excluir</div>
<div class="t" style="left:294px;top:689.66px;font-size:15.62px;color:#D2D2CE;font-weight:normal;font-family:'Liberation Sans',sans-serif;transform:scaleX(0.9346);transform-origin:0 0;">Override File Type</div>
<div style="position:absolute;left:267px;top:719px;width:374px;height:1px;background:#5D6070;"></div>
<div class="t" style="left:294px;top:732.66px;font-size:15.62px;color:#D2D2CE;font-weight:normal;font-family:'Liberation Sans',sans-serif;transform:scaleX(0.9346);transform-origin:0 0;">Build <u>M</u>odule 'demo'</div>
<div style="position:absolute;left:267px;top:761px;width:374px;height:1px;background:#5D6070;"></div>
<div class="t" style="left:294px;top:774.66px;font-size:15.62px;color:#D2D2CE;font-weight:normal;font-family:'Liberation Sans',sans-serif;transform:scaleX(0.9346);transform-origin:0 0;">Open in Right Split</div>
<div class="t" style="right:1278px;top:774.66px;font-size:15.62px;color:#D2D2CE;transform:scaleX(0.9346);transform-origin:100% 0;">Shift<span style="margin:0 1.05px">+</span>Enter</div>
<div class="t" style="left:294px;top:806.66px;font-size:15.62px;color:#D2D2CE;font-weight:normal;font-family:'Liberation Sans',sans-serif;transform:scaleX(0.9346);transform-origin:0 0;">Open In</div>
<div style="position:absolute;left:267px;top:835px;width:374px;height:1px;background:#5D6070;"></div>
<div class="t" style="left:294px;top:848.66px;font-size:15.62px;color:#D2D2CE;font-weight:normal;font-family:'Liberation Sans',sans-serif;transform:scaleX(0.9346);transform-origin:0 0;">Local <u>H</u>istory</div>
<div class="t" style="left:294px;top:879.66px;font-size:15.62px;color:#D2D2CE;font-weight:normal;font-family:'Liberation Sans',sans-serif;transform:scaleX(0.9346);transform-origin:0 0;">Reload from Disk</div>
<div style="position:absolute;left:267px;top:909px;width:374px;height:1px;background:#5D6070;"></div>
<div class="t" style="left:294px;top:922.66px;font-size:15.62px;color:#D2D2CE;font-weight:normal;font-family:'Liberation Sans',sans-serif;transform:scaleX(0.9346);transform-origin:0 0;">Compare With<span style="letter-spacing:0px">...</span></div>
<div class="t" style="right:1278px;top:922.66px;font-size:15.62px;color:#D2D2CE;transform:scaleX(0.9346);transform-origin:100% 0;">Ctrl<span style="margin:0 1.05px">+</span>D</div>
<div style="position:absolute;left:267px;top:951px;width:374px;height:1px;background:#5D6070;"></div>
<div class="t" style="left:294px;top:964.66px;font-size:15.62px;color:#D2D2CE;font-weight:normal;font-family:'Liberation Sans',sans-serif;transform:scaleX(0.9346);transform-origin:0 0;">Diagrams</div>
<div style="position:absolute;left:267px;top:993px;width:374px;height:1px;background:#5D6070;"></div>
<div class="t" style="left:294px;top:1007.66px;font-size:15.62px;color:#D2D2CE;font-weight:normal;font-family:'Liberation Sans',sans-serif;transform:scaleX(0.9346);transform-origin:0 0;">Convert Java File to Kotlin File</div>
<div class="t" style="right:1278px;top:1007.66px;font-size:15.62px;color:#D2D2CE;transform:scaleX(0.9346);transform-origin:100% 0;">Ctrl<span style="margin:0 1.05px">+</span>Alt<span style="margin:0 1.05px">+</span>Shift<span style="margin:0 1.05px">+</span>K</div>
<div class="t" style="left:294px;top:1038.66px;font-size:15.62px;color:#D2D2CE;font-weight:normal;font-family:'Liberation Sans',sans-serif;transform:scaleX(0.9346);transform-origin:0 0;">Create Gist<span style="letter-spacing:0px">...</span></div>
<div style="position:absolute;left:648px;top:387px;width:285px;height:687px;background:#414450;border:1px solid #2A2C37;box-sizing:border-box;"></div>
<div style="position:absolute;left:655px;top:975px;width:272px;height:28px;background:#6272A4;border-radius:5px;"></div>
<div class="t" style="left:667px;top:402.66px;font-size:15.62px;color:#D2D2CE;font-weight:normal;font-family:'Liberation Sans',sans-serif;transform:scaleX(0.9346);transform-origin:0 0;"><u>R</u>ename<span style="letter-spacing:0px">...</span></div>
<div class="t" style="right:998px;top:402.66px;font-size:15.62px;color:#D2D2CE;transform:scaleX(0.9346);transform-origin:100% 0;">Alt<span style="margin:0 1.05px">+</span>Shift<span style="margin:0 1.05px">+</span>R</div>
<div class="t" style="left:667px;top:433.66px;font-size:15.62px;color:#D2D2CE;font-weight:normal;font-family:'Liberation Sans',sans-serif;transform:scaleX(0.9346);transform-origin:0 0;">Rename File<span style="letter-spacing:0px">...</span></div>
<div class="t" style="left:667px;top:464.66px;font-size:15.62px;color:#D2D2CE;font-weight:normal;font-family:'Liberation Sans',sans-serif;transform:scaleX(0.9346);transform-origin:0 0;">Change Si<u>g</u>nature<span style="letter-spacing:0px">...</span></div>
<div class="t" style="right:998px;top:464.66px;font-size:15.62px;color:#D2D2CE;transform:scaleX(0.9346);transform-origin:100% 0;">Alt<span style="margin:0 1.05px">+</span>Shift<span style="margin:0 1.05px">+</span>C</div>
<div style="position:absolute;left:662px;top:493px;width:258px;height:1px;background:#5D6070;"></div>
<div class="t" style="left:667px;top:507.66px;font-size:15.62px;color:#D2D2CE;font-weight:normal;font-family:'Liberation Sans',sans-serif;transform:scaleX(0.9346);transform-origin:0 0;">Extract <u>D</u>elegate<span style="letter-spacing:0px">...</span></div>
<div class="t" style="left:667px;top:538.66px;font-size:15.62px;color:#D2D2CE;font-weight:normal;font-family:'Liberation Sans',sans-serif;transform:scaleX(0.9346);transform-origin:0 0;">Extract <u>I</u>nterface<span style="letter-spacing:0px">...</span></div>
<div class="t" style="left:667px;top:569.66px;font-size:15.62px;color:#D2D2CE;font-weight:normal;font-family:'Liberation Sans',sans-serif;transform:scaleX(0.9346);transform-origin:0 0;">Extract S<u>u</u>perclass<span style="letter-spacing:0px">...</span></div>
<div class="t" style="left:667px;top:601.66px;font-size:15.62px;color:#D2D2CE;font-weight:normal;font-family:'Liberation Sans',sans-serif;transform:scaleX(0.9346);transform-origin:0 0;">I<u>n</u>line<span style="letter-spacing:0px">...</span></div>
<div class="t" style="right:998px;top:601.66px;font-size:15.62px;color:#D2D2CE;transform:scaleX(0.9346);transform-origin:100% 0;">Alt<span style="margin:0 1.05px">+</span>Shift<span style="margin:0 1.05px">+</span>I</div>
<div style="position:absolute;left:662px;top:630px;width:258px;height:1px;background:#5D6070;"></div>
<div class="t" style="left:667px;top:643.66px;font-size:15.62px;color:#D2D2CE;font-weight:normal;font-family:'Liberation Sans',sans-serif;transform:scaleX(0.9346);transform-origin:0 0;">Move Class<span style="letter-spacing:0px">...</span></div>
<div class="t" style="right:998px;top:643.66px;font-size:15.62px;color:#D2D2CE;transform:scaleX(0.9346);transform-origin:100% 0;">Alt<span style="margin:0 1.05px">+</span>Shift<span style="margin:0 1.05px">+</span>V</div>
<div class="t" style="left:667px;top:674.66px;font-size:15.62px;color:#D2D2CE;font-weight:normal;font-family:'Liberation Sans',sans-serif;transform:scaleX(0.9346);transform-origin:0 0;">Copy Class<span style="letter-spacing:0px">...</span></div>
<div class="t" style="left:667px;top:706.66px;font-size:15.62px;color:#D2D2CE;font-weight:normal;font-family:'Liberation Sans',sans-serif;transform:scaleX(0.9346);transform-origin:0 0;">Safe <u>D</u>elete<span style="letter-spacing:0px">...</span></div>
<div class="t" style="right:998px;top:706.66px;font-size:15.62px;color:#D2D2CE;transform:scaleX(0.9346);transform-origin:100% 0;">Alt<span style="margin:0 1.05px">+</span>Excluir</div>
<div style="position:absolute;left:662px;top:735px;width:258px;height:1px;background:#5D6070;"></div>
<div class="t" style="left:667px;top:748.66px;font-size:15.62px;color:#D2D2CE;font-weight:normal;font-family:'Liberation Sans',sans-serif;transform:scaleX(0.9346);transform-origin:0 0;">Pu<u>l</u>l Members Up<span style="letter-spacing:0px">...</span></div>
<div class="t" style="left:667px;top:779.66px;font-size:15.62px;color:#D2D2CE;font-weight:normal;font-family:'Liberation Sans',sans-serif;transform:scaleX(0.9346);transform-origin:0 0;">Pu<u>s</u>h Members Down<span style="letter-spacing:0px">...</span></div>
<div style="position:absolute;left:662px;top:808px;width:258px;height:1px;background:#5D6070;"></div>
<div class="t" style="left:667px;top:822.66px;font-size:15.62px;color:#D2D2CE;font-weight:normal;font-family:'Liberation Sans',sans-serif;transform:scaleX(0.9346);transform-origin:0 0;">Use Interface <u>W</u>here Possible<span style="letter-spacing:0px">...</span></div>
<div class="t" style="left:667px;top:853.66px;font-size:15.62px;color:#D2D2CE;font-weight:normal;font-family:'Liberation Sans',sans-serif;transform:scaleX(0.9346);transform-origin:0 0;">Replace <u>I</u>nheritance with Delegation<span style="letter-spacing:0px">...</span></div>
<div style="position:absolute;left:662px;top:883px;width:258px;height:1px;background:#5D6070;"></div>
<div class="t" style="left:667px;top:896.66px;font-size:15.62px;color:#D2D2CE;font-weight:normal;font-family:'Liberation Sans',sans-serif;transform:scaleX(0.9346);transform-origin:0 0;"><u>E</u>ncapsulate Fields<span style="letter-spacing:0px">...</span></div>
<div style="position:absolute;left:662px;top:925px;width:258px;height:1px;background:#5D6070;"></div>
<div class="t" style="left:667px;top:938.66px;font-size:15.62px;color:#D2D2CE;font-weight:normal;font-family:'Liberation Sans',sans-serif;transform:scaleX(0.9346);transform-origin:0 0;">Convert Raw Types to Generics<span style="letter-spacing:0px">...</span></div>
<div style="position:absolute;left:662px;top:967px;width:258px;height:1px;background:#5D6070;"></div>
<div class="t" style="left:667px;top:981.66px;font-size:15.62px;color:#D2D2CE;font-weight:normal;font-family:'Liberation Sans',sans-serif;transform:scaleX(0.9346);transform-origin:0 0;">Transform to Jakarta-EE-10</div>
<div class="t" style="left:667px;top:1012.66px;font-size:15.62px;color:#D2D2CE;font-weight:normal;font-family:'Liberation Sans',sans-serif;transform:scaleX(0.9346);transform-origin:0 0;">Migrate to AndroidX<span style="letter-spacing:0px">...</span></div>
<div class="t" style="left:667px;top:1043.66px;font-size:15.62px;color:#D2D2CE;font-weight:normal;font-family:'Liberation Sans',sans-serif;transform:scaleX(0.9346);transform-origin:0 0;">Add Right-to-Left (RTL) Support<span style="letter-spacing:0px">...</span></div>
<svg style="left:631px;top:229px;" width="7" height="12" viewBox="0 0 7 12"><path d="M0.5 0.5 L6.3 6.0 L0.5 11.5" fill="none" stroke="#A9ABB3" stroke-width="1.3"/></svg>
<svg style="left:631px;top:439px;" width="7" height="12" viewBox="0 0 7 12"><path d="M0.5 0.5 L6.3 6.0 L0.5 11.5" fill="none" stroke="#A9ABB3" stroke-width="1.3"/></svg>
<svg style="left:631px;top:481px;" width="7" height="12" viewBox="0 0 7 12"><path d="M0.5 0.5 L6.3 6.0 L0.5 11.5" fill="none" stroke="#FFFFFF" stroke-width="1.3"/></svg>
<svg style="left:631px;top:524px;" width="7" height="12" viewBox="0 0 7 12"><path d="M0.5 0.5 L6.3 6.0 L0.5 11.5" fill="none" stroke="#A9ABB3" stroke-width="1.3"/></svg>
<svg style="left:631px;top:808px;" width="7" height="12" viewBox="0 0 7 12"><path d="M0.5 0.5 L6.3 6.0 L0.5 11.5" fill="none" stroke="#A9ABB3" stroke-width="1.3"/></svg>
<svg style="left:631px;top:850px;" width="7" height="12" viewBox="0 0 7 12"><path d="M0.5 0.5 L6.3 6.0 L0.5 11.5" fill="none" stroke="#A9ABB3" stroke-width="1.3"/></svg>
<svg style="left:631px;top:966px;" width="7" height="12" viewBox="0 0 7 12"><path d="M0.5 0.5 L6.3 6.0 L0.5 11.5" fill="none" stroke="#A9ABB3" stroke-width="1.3"/></svg>
<svg style="left:269px;top:268px;" width="18" height="17" viewBox="0 0 18 17"><circle cx="3.5" cy="3.5" r="2.6" fill="none" stroke="#8C8F9A" stroke-width="1.5"/><circle cx="3.5" cy="13.5" r="2.6" fill="none" stroke="#8C8F9A" stroke-width="1.5"/><path d="M5.5 11.8 L17 1.5 M5.5 5.2 L17 15.5" stroke="#8C8F9A" stroke-width="1.5"/></svg>
<svg style="left:270px;top:299px;" width="17" height="18" viewBox="0 0 17 18"><path d="M1.3 12.7 V1.3 H11.8" fill="none" stroke="#8C8F9A" stroke-width="2.5"/><rect x="4" y="3.8" width="11.7" height="12.8" fill="#8C8F9A"/><path d="M7.3 6.8 H12.8 M7.3 9.8 H12.8 M7.3 12.8 H12.8" stroke="#414450" stroke-width="1.3"/></svg>
<svg style="left:271px;top:362px;" width="15" height="18" viewBox="0 0 15 18"><rect x="1.8" y="2.5" width="10.4" height="13.2" fill="none" stroke="#8C8F9A" stroke-width="2"/><rect x="4.8" y="0.3" width="4.4" height="3.4" rx="1" fill="#8C8F9A"/></svg>
<svg style="left:272px;top:774px;" width="15" height="15" viewBox="0 0 15 15"><rect x="0.5" y="0.5" width="13.5" height="13.5" fill="none" stroke="#8C8F9A" stroke-width="1.2"/><path d="M7.25 0.5 V14" stroke="#8C8F9A" stroke-width="1.2"/></svg>
<svg style="left:270px;top:879px;" width="17" height="16" viewBox="0 0 17 16"><path d="M14 5 A6.5 6.5 0 0 0 2.5 5.5 M3 11 A6.5 6.5 0 0 0 14.5 10.5" fill="none" stroke="#8C8F9A" stroke-width="2"/><path d="M10.5 5.5 H16 V0 Z M6.5 10.5 H1 V16 Z" fill="#8C8F9A"/></svg>
<svg style="left:266px;top:918px;" width="26" height="26" viewBox="0 0 26 26"><path d="M10.6 8.3 L15.7 2.9 V7 H21 V9.7 H15.7 V13.4 Z" fill="#589DF6"/><path d="M13.3 15.7 L8.2 10.7 V14.5 H2.9 V16.9 H8.2 V21 Z" fill="#589DF6"/></svg>
<svg style="left:269px;top:963px;" width="19" height="19" viewBox="0 0 19 19"><rect x="0" y="0" width="18" height="3.5" fill="#7C7F8A"/><rect x="0" y="14.5" width="18" height="3.5" fill="#7C7F8A"/><path d="M5 13 V6 M2.5 8.5 L5 5.5 L7.5 8.5" stroke="#589DF6" stroke-width="1.4" fill="none"/><path d="M13 13 V6" stroke="#589DF6" stroke-width="1.4" stroke-dasharray="2 1.2"/><path d="M10.5 8.5 L13 5.5 L15.5 8.5" stroke="#589DF6" stroke-width="1.4" fill="none"/></svg>
<svg style="left:269px;top:1037px;" width="18" height="18" viewBox="0 0 18 18"><path fill="#FFFFFF" d="M9 0C4 0 0 4 0 9c0 4 2.6 7.4 6.2 8.6.5.1.6-.2.6-.4v-1.6c-2.5.5-3-1.2-3-1.2-.4-1-1-1.3-1-1.3-.8-.6.1-.6.1-.6.9.1 1.4.9 1.4.9.8 1.4 2.1 1 2.6.8.1-.6.3-1 .6-1.2-2-.2-4.1-1-4.1-4.4 0-1 .3-1.8.9-2.4-.1-.2-.4-1.1.1-2.4 0 0 .8-.2 2.5.9.7-.2 1.5-.3 2.2-.3.8 0 1.5.1 2.2.3 1.7-1.2 2.5-.9 2.5-.9.5 1.3.2 2.2.1 2.4.6.6.9 1.4.9 2.4 0 3.4-2.1 4.2-4.1 4.4.3.3.6.8.6 1.6v2.4c0 .2.1.5.6.4C15.4 16.4 18 13 18 9c0-5-4-9-9-9z"/></svg>
</body></html>
